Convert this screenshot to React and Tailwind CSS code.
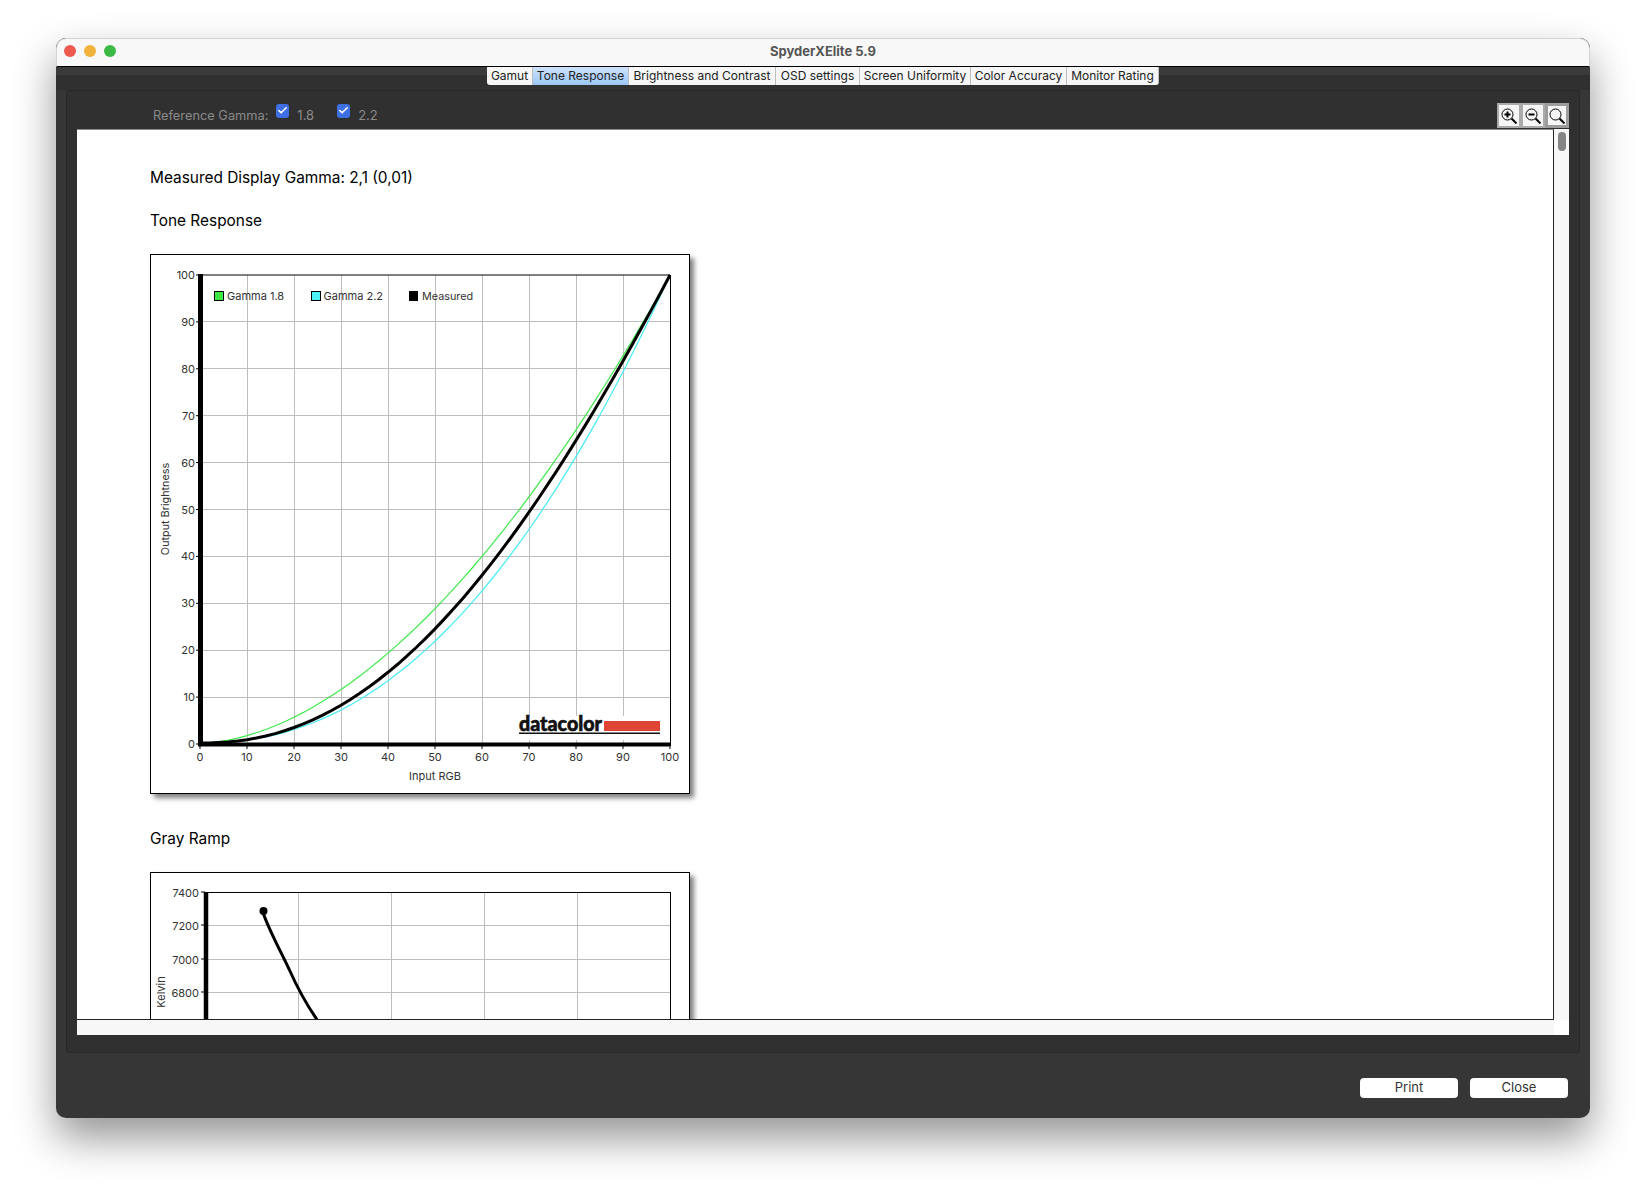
import { Check } from "lucide-react";

const tabs = [
  { label: "Gamut", w: "w-[46px]" },
  { label: "Tone Response", w: "w-[96px]", active: true },
  { label: "Brightness and Contrast", w: "w-[147px]" },
  { label: "OSD settings", w: "w-[84px]" },
  { label: "Screen Uniformity", w: "w-[111px]" },
  { label: "Color Accuracy", w: "w-[96px]" },
  { label: "Monitor Rating", w: "w-[92px]" },
];

const ticks = [0, 10, 20, 30, 40, 50, 60, 70, 80, 90, 100];

// curve in page coordinates, gamma can drift with input for the measured line
const gammaPoints = (gammaAt) => {
  const pts = [];
  for (let i = 0; i <= 100; i += 2) {
    const t = i / 100;
    const v = 0.002 + 0.998 * Math.pow(t, gammaAt(t));
    pts.push(`${(200 + 470 * t).toFixed(1)},${(744 - 469 * v).toFixed(1)}`);
  }
  return pts.join(" ");
};

const ToneChart = () => (
  <div className="box-border h-[540px] w-[540px] shrink-0 border border-black bg-white shadow-[4px_4px_5px_rgba(0,0,0,0.5)]">
    <svg viewBox="151 255 538 538" className="block h-[538px] w-[538px]" fontFamily="Inter, sans-serif" fontSize="11" fill="#333">
      <g shapeRendering="crispEdges">
        {ticks.slice(1, 10).map((t) => (
          <g key={t}>
            <line x1={200 + 4.7 * t} x2={200 + 4.7 * t} y1="275" y2="744" stroke="#bdbdbd" />
            <line x1="200" x2="670" y1={744 - 4.69 * t} y2={744 - 4.69 * t} stroke="#bdbdbd" />
          </g>
        ))}
      </g>
      <rect x="515" y="716" width="150" height="24" fill="#fff" />
      <polyline points={gammaPoints(() => 1.8)} fill="none" stroke="#3ee84a" strokeWidth="1.2" />
      <polyline points={gammaPoints(() => 2.2)} fill="none" stroke="#45eef5" strokeWidth="1.2" />
      <polyline points={gammaPoints((t) => 2.17 - 0.27 * t)} fill="none" stroke="#000" strokeWidth="3" />
      <line x1="200" x2="670" y1="275" y2="275" stroke="#000" />
      <line x1="670.5" x2="670.5" y1="275" y2="746" stroke="#000" />
      <line x1="200.5" x2="200.5" y1="274" y2="746" stroke="#000" strokeWidth="5" />
      <line x1="198" x2="670" y1="744.5" y2="744.5" stroke="#000" strokeWidth="4" />
      {ticks.map((t) => (
        <g key={t}>
          <line x1="196" x2="199" y1={744 - 4.69 * t} y2={744 - 4.69 * t} stroke="#000" />
          <line x1={200 + 4.7 * t} x2={200 + 4.7 * t} y1="745" y2="749" stroke="#000" />
          <text x="195" y={748 - 4.69 * t} textAnchor="end">{t}</text>
          <text x={200 + 4.7 * t} y="761" textAnchor="middle">{t}</text>
        </g>
      ))}
      <text x="435" y="780" textAnchor="middle">Input RGB</text>
      <text transform="translate(169 509) rotate(-90)" textAnchor="middle" fontSize="10.8">Output Brightness</text>

      <rect x="214.5" y="291.5" width="9" height="9" fill="#3ee63f" stroke="#000" />
      <text x="227" y="300">Gamma 1.8</text>
      <rect x="311.5" y="291.5" width="9" height="9" fill="#4df3f7" stroke="#000" />
      <text x="323.5" y="300">Gamma 2.2</text>
      <rect x="409" y="291" width="9" height="10" fill="#000" />
      <text x="422" y="300" fontSize="10.8">Measured</text>

      <text x="519" y="731" fontFamily="Lato, sans-serif" fontWeight="900" fontSize="20" fill="#111" stroke="#111" strokeWidth="0.6" textLength="83" lengthAdjust="spacingAndGlyphs">datacolor</text>
      <rect x="604" y="721" width="56" height="10" fill="#e04434" />
      <rect x="519" y="732.5" width="141" height="1.5" fill="#111" />
    </svg>
  </div>
);

const RampChart = () => (
  <div className="box-border h-[540px] w-[540px] shrink-0 border border-black bg-white shadow-[4px_4px_5px_rgba(0,0,0,0.5)]">
    <svg viewBox="151 873 538 538" className="block h-[538px] w-[538px]" fontFamily="Inter, sans-serif" fontSize="11" fill="#333">
      <g shapeRendering="crispEdges">
        {[298, 391, 484, 577].map((x) => (
          <line key={x} x1={x} x2={x} y1="892" y2="1060" stroke="#bdbdbd" />
        ))}
        {[925, 959, 992].map((y) => (
          <line key={y} x1="206" x2="670" y1={y} y2={y} stroke="#bdbdbd" />
        ))}
      </g>
      <line x1="204" x2="670" y1="892.5" y2="892.5" stroke="#000" />
      <line x1="670.5" x2="670.5" y1="892" y2="1060" stroke="#000" />
      <line x1="206" x2="206" y1="892" y2="1060" stroke="#000" strokeWidth="4.5" />
      {[
        ["7400", 892],
        ["7200", 925],
        ["7000", 959],
        ["6800", 992],
      ].map(([label, y]) => (
        <g key={label}>
          <line x1="201" x2="205" y1={y} y2={y} stroke="#000" />
          <text x="199" y={y + 4.5} textAnchor="end">{label}</text>
        </g>
      ))}
      <text transform="translate(165 992) rotate(-90)" textAnchor="middle">Kelvin</text>
      <path d="M263.5 914 C270 932 280 950 289 969 C297 987 306 1004 318 1021" fill="none" stroke="#000" strokeWidth="3" />
      <circle cx="263.5" cy="911" r="4" fill="#000" />
    </svg>
  </div>
);

const Magnifier = ({ mark }) => (
  <svg viewBox="0 0 18 18" className="h-[18px] w-[18px]" fill="none" stroke="#000">
    <circle cx="7.5" cy="7.5" r="5.5" strokeWidth="1" />
    <line x1="11.5" y1="11.5" x2="16.5" y2="16.5" strokeWidth="2" />
    {mark && <line x1="4.5" y1="7.5" x2="10.5" y2="7.5" strokeWidth="2" />}
    {mark === "plus" && <line x1="7.5" y1="4.5" x2="7.5" y2="10.5" strokeWidth="2" />}
  </svg>
);

const GammaCheck = ({ label, className }) => (
  <div className={`flex items-center ${className}`}>
    <span className="mb-[11px] flex h-[14px] w-[13px] items-center justify-center rounded-[3px] bg-[#3e6fe3]">
      <Check size={11} strokeWidth={3.5} color="#fff" />
    </span>
    <span className="ml-[8px] text-[13px] text-[#8a8a8a]">{label}</span>
  </div>
);

const App = () => {
  return (
    <div className="h-[1192px] w-[1646px] overflow-hidden bg-white pl-[56px] pt-[38px] font-['Inter',sans-serif]">
      <div className="flex h-[1080px] w-[1534px] flex-col overflow-hidden rounded-[10px] bg-[#363636] shadow-[0_20px_42px_rgba(0,0,0,0.42)]">
        <div className="relative flex h-[29px] shrink-0 items-center justify-center rounded-t-[10px] border-x border-t border-b border-x-[#d4d4d4] border-t-[#d4d4d4] border-b-black bg-[#f8f8f8] pb-[2px]">
          <div className="absolute left-[7px] top-[6px] flex gap-[8px]">
            <span className="h-[12px] w-[12px] rounded-full bg-[#ee5a50]" />
            <span className="h-[12px] w-[12px] rounded-full bg-[#f2b33d]" />
            <span className="h-[12px] w-[12px] rounded-full bg-[#3cba45]" />
          </div>
          <span className="text-[13px] font-bold text-[#555]">SpyderXElite 5.9</span>
        </div>

        <div className="h-[23px] shrink-0 bg-[linear-gradient(#3a3a3a_0,#3a3a3a_8px,#303030_8px)]">
          <div className="flex justify-center">
            {tabs.map((tab) => (
              <div
                key={tab.label}
                className={`flex h-[18px] items-center justify-center whitespace-nowrap border-r border-[#bdbdbd] text-[12px] text-[#222] first:rounded-bl-[3px] last:rounded-br-[3px] ${tab.w} ${
                  tab.active ? "bg-[linear-gradient(#cfe3fd,#9cc6f7)]" : "bg-[#f6f6f6]"
                }`}
              >
                {tab.label}
              </div>
            ))}
          </div>
        </div>

        <div className="mx-[10px] flex h-[963px] shrink-0 flex-col rounded-b-[3px] border border-[#282828] bg-[#303030] px-[10px] pb-[17px]">
          <div className="flex h-[38px] shrink-0 items-center pl-[76px] pt-[12px]">
            <span className="text-[12.8px] text-[#8a8a8a]">Reference Gamma:</span>
            <GammaCheck label="1.8" className="ml-[8px]" />
            <GammaCheck label="2.2" className="ml-[23px]" />
            <div className="mb-[1px] ml-auto flex self-end">
              <div className="flex h-[25px] w-[24px] items-center justify-center border-[2px] border-[#aaa] bg-[#f6f6f6]"><Magnifier mark="plus" /></div>
              <div className="flex h-[25px] w-[24px] items-center justify-center border-[2px] border-[#aaa] bg-[#f6f6f6]"><Magnifier mark="minus" /></div>
              <div className="flex h-[25px] w-[24px] items-center justify-center border-[3px] border-[#9c9c9c] bg-[#f6f6f6]"><Magnifier /></div>
            </div>
          </div>

          <div className="flex min-h-0 flex-1 flex-col">
            <div className="flex min-h-0 flex-1">
              <div className="min-w-0 flex-1 overflow-hidden border-b border-r border-t border-b-[#222] border-r-[#222] border-t-[#8c8c8c] bg-white pl-[73px] pt-[38px] text-[15.4px] leading-[20px] text-black">
                <div>Measured Display Gamma: 2,1 (0,01)</div>
                <div className="mt-[23px]">Tone Response</div>
                <div className="mt-[23px]"><ToneChart /></div>
                <div className="mt-[35px]">Gray Ramp</div>
                <div className="mt-[23px]"><RampChart /></div>
              </div>
              <div className="w-[15px] shrink-0 bg-[#f7f7f7] pl-[4px] pt-[3px]">
                <div className="h-[19px] w-[8px] rounded-full bg-[#858585]" />
              </div>
            </div>
            <div className="flex h-[15px] shrink-0">
              <div className="flex-1 bg-[#f7f7f7]" />
              <div className="w-[15px] bg-white" />
            </div>
          </div>
        </div>

        <div className="flex flex-1 items-start justify-end gap-[12px] pr-[22px] pt-[25px]">
          <button className="h-[20px] w-[98px] rounded-[4px] bg-white text-[13px] text-[#333]">Print</button>
          <button className="h-[20px] w-[98px] rounded-[4px] bg-white text-[13px] text-[#333]">Close</button>
        </div>
      </div>
    </div>
  );
};

export default App;
